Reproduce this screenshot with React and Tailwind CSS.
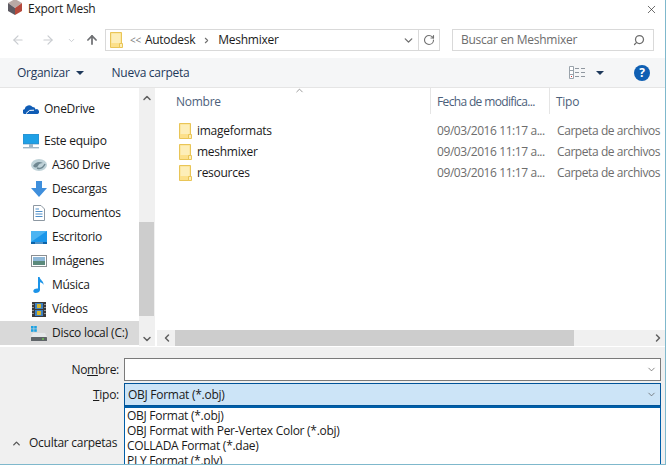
import { ChevronDown, ChevronUp, ChevronLeft, ChevronRight, ArrowLeft, ArrowRight, ArrowUp, RotateCw, Search, X } from 'lucide-react';

const FolderIcon = ({ className }) => (
  <svg viewBox="0 0 13 16" className={className}>
    <path d="M0.5 0.5H11.5V15.5H0.5Z" fill="#fce08a" stroke="#e9c557" />
    <path d="M1.5 1.5H10.5V11H1.5Z" fill="#fdeeb8" />
    <path d="M9.5 11.5H12.5V15.5H9.5Z" fill="#fdeeb8" stroke="#e9c557" />
  </svg>
);

const MeshLogo = () => (
  <svg viewBox="0 0 16 16" className="w-4 h-4 -mt-[4px] ml-[7px] mr-[5px]">
    <path d="M8 0L15 4L8 9L1 4Z" fill="#b9a9a5" />
    <path d="M1 4L8 9V16L1 12Z" fill="#5d5a62" />
    <path d="M15 4L8 9V16L15 12Z" fill="#b5493c" />
  </svg>
);

const OneDriveIcon = () => (
  <svg viewBox="0 0 16 10" className="w-4 h-[10px]">
    <path d="M1 10a2.5 2.5 0 0 1 .6-4.8A4.5 4.5 0 0 1 9.6 3a3 3 0 0 1 3 2.4A2.4 2.4 0 0 1 14.5 10Z" fill="#0f5cb5" />
    <path d="M3 9.6 Q6 5 11 6.2" stroke="#fff" strokeWidth="1" fill="none" />
  </svg>
);

const MonitorIcon = () => (
  <svg viewBox="0 0 16 15" className="w-4 h-[15px]">
    <rect x="0" y="0" width="16" height="10" fill="#1fa0e6" stroke="#3c7fb1" strokeWidth="0.6" />
    <rect x="6" y="10" width="4" height="3" fill="#9fb6c6" />
    <rect x="0" y="13" width="16" height="1.4" fill="#9fb6c6" />
  </svg>
);

const A360Icon = () => (
  <svg viewBox="0 0 16 14" className="w-4 h-[14px]">
    <ellipse cx="8" cy="7" rx="8" ry="6" fill="#bfd2d8" />
    <path d="M2 8Q6 2 12 5Q8 5 7 8Q5 11 2 8Z" fill="#6f8791" />
    <path d="M14 6Q11 12 6 10" stroke="#6f8791" strokeWidth="1.4" fill="none" />
  </svg>
);

const DownloadIcon = () => (
  <svg viewBox="0 0 16 16" className="w-4 h-4">
    <path d="M5 0H11V7H16L8 16L0 7H5Z" fill="#3f8fdc" />
  </svg>
);

const DocIcon = () => (
  <svg viewBox="0 0 14 16" className="w-[14px] h-4">
    <path d="M1.5 0.5H9L12.5 4V15.5H1.5Z" fill="#fff" stroke="#8d98a2" />
    <path d="M3.5 4H7M3.5 6.5H10.5M3.5 9H10.5M3.5 11.5H10.5" stroke="#4f8fc9" />
  </svg>
);

const DesktopIcon = () => (
  <svg viewBox="0 0 16 13" className="w-4 h-[13px]">
    <rect width="16" height="13" fill="#1c97ea" />
    <path d="M0 0H16L0 11Z" fill="#4cb4f2" />
    <rect y="11" width="16" height="2" fill="#0c63a8" />
    <rect x="4" y="11.6" width="8" height="0.8" fill="#b8dcf5" />
  </svg>
);

const PicturesIcon = () => (
  <svg viewBox="0 0 16 12" className="w-4 h-3">
    <rect x="0.5" y="0.5" width="15" height="11" fill="#fff" stroke="#8b8f93" />
    <rect x="2" y="2" width="12" height="4" fill="#8fb8d8" />
    <rect x="2" y="6" width="12" height="4" fill="#5c8a7c" />
  </svg>
);

const MusicIcon = () => (
  <svg viewBox="0 0 12 16" className="w-3 h-4">
    <path d="M5 0H6.6C7 3 11 4 10.5 8C10 6 8 5.4 7 5.2V13C7 15 4.6 16 2.6 16C1 16 0 15 0.4 13.6C0.8 12 3.4 11 5 11.6Z" fill="#1b93e8" />
  </svg>
);

const VideoIcon = () => (
  <svg viewBox="0 0 14 15" className="w-[14px] h-[15px]">
    <rect width="14" height="15" fill="#3a3a3a" />
    <rect x="3" y="1" width="8" height="6" fill="#3d80c4" />
    <rect x="3" y="8" width="8" height="6" fill="#3d80c4" />
    <path d="M5 2H9V6H5ZM5 9H9V13H5Z" fill="#d6b62c" />
    <path d="M1 2V3M1 5V6M1 8V9M1 11V12M13 2V3M13 5V6M13 8V9M13 11V12" stroke="#eee" />
  </svg>
);

const DiskIcon = () => (
  <svg viewBox="0 0 16 15" className="w-4 h-[15px]">
    <rect x="0" y="0" width="2.6" height="2.6" fill="#1ba1e2" />
    <rect x="3.2" y="0" width="2.6" height="2.6" fill="#1ba1e2" />
    <rect x="0" y="3.2" width="2.6" height="2.6" fill="#1ba1e2" />
    <rect x="3.2" y="3.2" width="2.6" height="2.6" fill="#1ba1e2" />
    <path d="M2 7H14L16 11H0Z" fill="#e6e8ea" />
    <rect y="11" width="16" height="4" rx="0.5" fill="#5f6468" />
    <rect x="11" y="12.4" width="2" height="1.2" fill="#6fdc50" />
  </svg>
);

const ViewIcon = ({ className }) => (
  <svg viewBox="0 0 17 13" className={className}>
    <path d="M0.5 0.5H4.5V12.5H0.5Z" fill="#fff" stroke="#9aa3ab" />
    <path d="M0.5 4.5H4.5M0.5 8.5H4.5" stroke="#9aa3ab" />
    <rect x="2" y="10" width="1" height="1" fill="#d13438" />
    <path d="M6 2.5H10M12 2.5H16M6 6.5H10M12 6.5H16M6 10.5H10M12 10.5H16" stroke="#8f979f" />
  </svg>
);

const Caret = ({ className }) => (
  <svg viewBox="0 0 8 4" className={className}>
    <path d="M0 0H8L4 4Z" fill="#1e395b" />
  </svg>
);

const navItems = [
  { label: 'A360 Drive', icon: <A360Icon /> },
  { label: 'Descargas', icon: <DownloadIcon /> },
  { label: 'Documentos', icon: <DocIcon /> },
  { label: 'Escritorio', icon: <DesktopIcon /> },
  { label: 'Imágenes', icon: <PicturesIcon /> },
  { label: 'Música', icon: <MusicIcon /> },
  { label: 'Vídeos', icon: <VideoIcon /> },
];

const files = ['imageformats', 'meshmixer', 'resources'];
const formats = [
  'OBJ Format (*.obj)',
  'OBJ Format with Per-Vertex Color (*.obj)',
  'COLLADA Format (*.dae)',
  'PLY Format (*.ply)',
];

export default function App() {
  return (
    <div className="w-[672px] h-[470px] bg-white overflow-hidden text-[12px] text-[#1a1a1a] font-['Open_Sans','Noto_Sans',sans-serif] tracking-[-0.27px]">
      <div className="relative w-[666px] h-[465px] flex flex-col border-r border-b border-[#7fb8cc] overflow-hidden">
        {/* title bar */}
        <div className="h-[18px] flex items-center">
          <MeshLogo />
          <span>Export Mesh</span>
          <X className="w-[13px] h-[13px] ml-auto mr-[7px] text-[#222]" strokeWidth={1.2} />
        </div>

        {/* nav row */}
        <div className="h-[40px] flex items-center pt-[11px] pb-[7px]">
          <div className="w-[105px] flex items-center pl-[11px] text-[#c9ccd0]">
            <ArrowLeft className="w-[14px] h-[14px]" strokeWidth={2} />
            <ArrowRight className="w-[14px] h-[14px] ml-[16px]" strokeWidth={2} />
            <ChevronDown className="w-[9px] h-[9px] ml-[12px]" strokeWidth={2.5} />
            <ArrowUp className="w-[14px] h-[14px] ml-[9px] text-[#6f7174]" strokeWidth={3} />
          </div>
          <div className="w-[335px] h-[22px] border border-[#d9d9d9] flex items-center">
            <FolderIcon className="w-[13px] h-[16px] ml-[4px]" />
            <span className="ml-[7px] text-[#808080] text-[10px]">&lt;&lt;</span>
            <span className="ml-[4px]">Autodesk</span>
            <ChevronRight className="w-[9px] h-[9px] ml-[7px] text-[#707070]" strokeWidth={3} />
            <span className="ml-[7px]">Meshmixer</span>
            <ChevronDown className="w-[13px] h-[13px] ml-auto mr-[3px] text-[#707070]" strokeWidth={2.5} />
            <div className="w-[21px] h-full border-l border-[#d9d9d9] flex items-center justify-center">
              <RotateCw className="w-[12px] h-[12px] text-[#707070]" strokeWidth={2.2} />
            </div>
          </div>
          <div className="w-[202px] h-[22px] ml-[12px] border border-[#d9d9d9] flex items-center pl-[8px] pr-[8px] text-[#6d6d6d]">
            <span>Buscar en Meshmixer</span>
            <Search className="w-[12px] h-[12px] ml-auto -scale-x-100 text-[#6d6d6d]" strokeWidth={2.5} />
          </div>
        </div>

        {/* toolbar */}
        <div className="h-[30px] bg-[#f5f6f7] border-b border-[#e5e5e5] flex items-center text-[#1e395b]">
          <span className="ml-[17px] mt-[1px]">Organizar</span>
          <Caret className="w-2 h-1 ml-[6px]" />
          <span className="ml-[28px] mt-[1px]">Nueva carpeta</span>
          <ViewIcon className="w-[17px] h-[13px] ml-auto" />
          <Caret className="w-2 h-1 ml-[10px]" />
          <div className="w-4 h-4 ml-[30px] mr-[15px] rounded-full bg-[#0f5fb3] text-white text-[12px] font-bold flex items-center justify-center">?</div>
        </div>

        {/* body */}
        <div className="h-[259px] flex">
          <div className="w-[139px] pt-[9px]">
            <div className="h-[24px] flex items-center gap-[5px] pl-[23px]">
              <OneDriveIcon />
              <span>OneDrive</span>
            </div>
            <div className="h-[24px] mt-[8px] flex items-center gap-[5px] pl-[23px]">
              <MonitorIcon />
              <span>Este equipo</span>
            </div>
            {navItems.map((item) => (
              <div key={item.label} className="h-[24px] flex items-center pl-[31px]">
                <div className="w-[16px] flex justify-center">{item.icon}</div>
                <span className="ml-[5px]">{item.label}</span>
              </div>
            ))}
            <div className="h-[24px] flex items-center pl-[31px] bg-[#d9d9d9]">
              <DiskIcon />
              <span className="ml-[5px]">Disco local (C:)</span>
            </div>
          </div>

          {/* nav scrollbar */}
          <div className="w-[16px] h-[258px] bg-[#f0f0f0] flex flex-col text-[#606060]">
            <ChevronUp className="w-[12px] h-[12px] mx-auto mt-[4px] shrink-0" strokeWidth={3} />
            <div className="w-[15px] h-[94px] mt-[118px] bg-[#cdcdcd]" />
            <ChevronDown className="w-[12px] h-[12px] mx-auto mt-[17px] shrink-0" strokeWidth={3} />
          </div>

          {/* file list */}
          <div className="ml-[2px] w-[508px] flex flex-col">
            <div className="h-[26px] flex text-[#4c607a]">
              <div className="relative w-[274px] pl-[19px] pt-[2px] flex items-center border-r border-[#e5e5e5]">
                Nombre
                <ChevronUp className="absolute left-[137px] -top-[3px] w-[11px] h-[11px] text-[#707070]" strokeWidth={1.5} />
              </div>
              <div className="w-[119px] pl-[6px] pt-[2px] flex items-center border-r border-[#e5e5e5] whitespace-nowrap tracking-[-0.65px]">Fecha de modifica...</div>
              <div className="pl-[6px] pt-[2px] flex items-center">Tipo</div>
            </div>
            <div className="pt-[6px] flex-1">
              {files.map((name) => (
                <div key={name} className="h-[21px] flex items-center whitespace-nowrap">
                  <FolderIcon className="w-[13px] h-[16px] ml-[22px] shrink-0" />
                  <span className="ml-[5px] w-[240px] shrink-0">{name}</span>
                  <span className="w-[120px] shrink-0 text-[#6d6d6d] tracking-[-0.42px]">09/03/2016 11:17 a...</span>
                  <span className="w-[104px] text-[#6d6d6d] tracking-[-0.42px]">Carpeta de archivos</span>
                </div>
              ))}
            </div>
            <div className="h-[16px] mb-[1px] bg-[#f0f0f0] flex items-center text-[#606060]">
              <ChevronLeft className="w-[12px] h-[12px] ml-[4px] shrink-0" strokeWidth={3} />
              <div className="w-[399px] h-full ml-[2px] bg-[#cdcdcd]" />
              <ChevronRight className="w-[12px] h-[12px] ml-auto mr-[1px] shrink-0" strokeWidth={3} />
            </div>
          </div>
        </div>

        {/* bottom form */}
        <div className="flex-1 bg-[#f0f0f0] pt-[11px]">
          <div className="flex items-center h-[23px]">
            <span className="w-[119px] text-right">No<u>m</u>bre:</span>
            <div className="ml-[5px] w-[537px] h-[23px] bg-white border border-[#7a7a7a] flex items-center justify-end pr-[3px]">
              <ChevronDown className="w-[11px] h-[11px] text-[#555]" strokeWidth={1.5} />
            </div>
          </div>
          <div className="flex items-center h-[23px] mt-[2px]">
            <span className="w-[119px] text-right"><u>T</u>ipo:</span>
            <div className="ml-[5px] w-[537px] h-[23px] bg-[#cce4f7] border border-[#005499] flex items-center pl-[3px] pr-[3px]">
              <span>OBJ Format (*.obj)</span>
              <ChevronDown className="w-[11px] h-[11px] ml-auto text-[#555]" strokeWidth={1.5} />
            </div>
          </div>
          <div className="flex items-center h-[16px] mt-[29px] pl-[11px]">
            <ChevronUp className="w-[11px] h-[11px] text-[#555]" strokeWidth={3} />
            <span className="ml-[7px]">Ocultar carpetas</span>
          </div>
        </div>

        {/* open dropdown */}
        <div className="absolute left-[124px] top-[406px] w-[537px] h-[60px] bg-white border-x border-t-2 border-[#005ea8] pl-[2px] leading-[15px]">
          {formats.map((f) => (
            <div key={f} className="h-[15px]">{f}</div>
          ))}
        </div>
      </div>
    </div>
  );
}
